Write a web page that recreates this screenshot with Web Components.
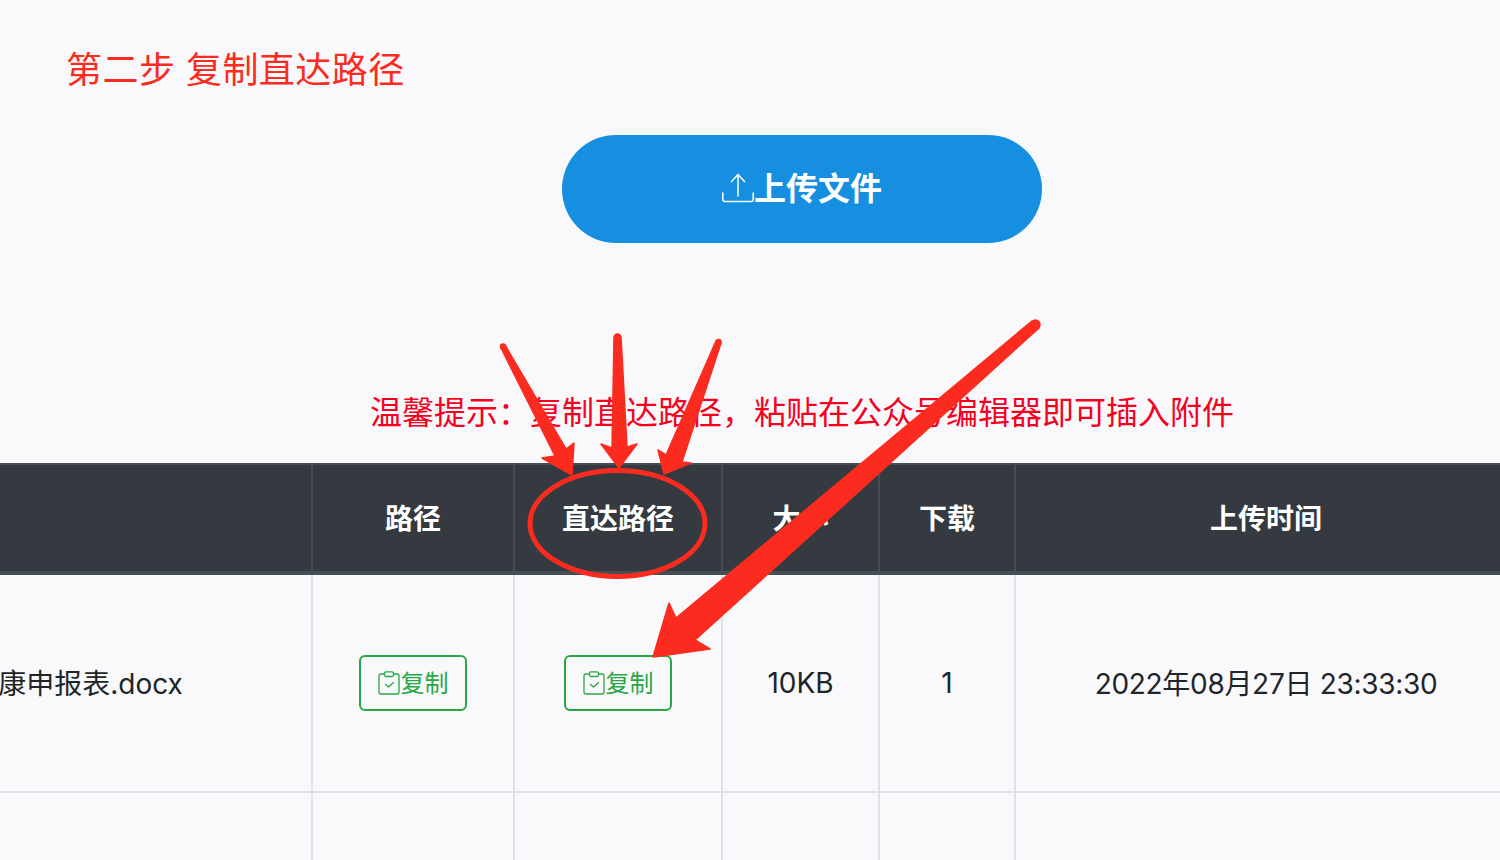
<!DOCTYPE html>
<html lang="zh">
<head>
<meta charset="utf-8">
<title>复制直达路径</title>
<style>
  html, body { margin: 0; padding: 0; height: 100%; overflow: hidden; background: #f9f9fc; }
  body { font-family: Inter, "Noto Sans CJK SC", sans-serif; color: #212529; }
</style>
</head>
<body>
<guide-page>
  <step-title>第二步 复制直达路径</step-title>
  <upload-button>上传文件</upload-button>
  <hint-text>温馨提示：复制直达路径，粘贴在公众号编辑器即可插入附件</hint-text>
  <file-table></file-table>
  <arrow-overlay></arrow-overlay>
</guide-page>

<script>
class GuidePage extends HTMLElement {
  constructor() {
    super();
    this.attachShadow({ mode: "open" });
    this.shadowRoot.innerHTML = `
      <style>
        :host {
          display: block;
          position: relative;
          width: 1500px;
          height: 860px;
          overflow: hidden;
          background: #f9f9fc;
        }
      </style>
      <slot></slot>
    `;
  }
}

class StepTitle extends HTMLElement {
  constructor() {
    super();
    this.attachShadow({ mode: "open" });
    this.shadowRoot.innerHTML = `
      <style>
        :host {
          display: block;
          padding: 45px 0 0 66px;
          font-size: 36px;
          letter-spacing: 0.45px;
          line-height: 50px;
          height: 50px;
          color: #fb2c1f;
        }
      </style>
      <slot></slot>
    `;
  }
}

class UploadButton extends HTMLElement {
  constructor() {
    super();
    this.attachShadow({ mode: "open" });
    this.shadowRoot.innerHTML = `
      <style>
        :host {
          display: flex;
          justify-content: center;
          margin: 40px 0 0 104px;
        }
        .btn {
          display: flex;
          align-items: center;
          justify-content: center;
          width: 480px;
          height: 108px;
          border-radius: 54px;
          background: #178fe0;
          color: #fff;
          font-size: 32px;
          font-weight: 700;
        }
        .label { padding-bottom: 6px; }
        svg { width: 32px; height: 32px; flex: none; }
      </style>
      <div class="btn">
        <svg viewBox="0 0 32 32" fill="none" stroke="#fff" stroke-width="1.5" stroke-linecap="round" stroke-linejoin="round">
          <path d="M16 1.500V23M9.500 8.500 16 1.500l6.500 7"/>
          <path d="M.8 20v6.500a2 2 0 0 0 2 2h26.400a2 2 0 0 0 2-2V20"/>
        </svg>
        <span class="label"><slot></slot></span>
      </div>
    `;
  }
}

class HintText extends HTMLElement {
  constructor() {
    super();
    this.attachShadow({ mode: "open" });
    this.shadowRoot.innerHTML = `
      <style>
        :host {
          display: block;
          margin: 146px 0 26px 104px;
          font-size: 32px;
          line-height: 48px;
          text-align: center;
          color: #f5001e;
        }
      </style>
      <slot></slot>
    `;
  }
}

class CopyButton extends HTMLElement {
  constructor() {
    super();
    this.attachShadow({ mode: "open" });
    this.shadowRoot.innerHTML = `
      <style>
        :host {
          display: inline-flex;
          align-items: center;
          justify-content: center;
          box-sizing: border-box;
          width: 108px;
          height: 56px;
          border: 2px solid #28a745;
          border-radius: 6px;
          color: #28a745;
          font-size: 24px;
          vertical-align: middle;
        }
        .label { padding-bottom: 4px; }
        svg { width: 23px; height: 25px; flex: none; }
      </style>
      <svg viewBox="0 0 23 25" fill="none" stroke="#28a745" stroke-width="1.300" stroke-linecap="round" stroke-linejoin="round">
        <path d="M6.500 3H3a2 2 0 0 0-2 2v16a2 2 0 0 0 2 2h16a2 2 0 0 0 2-2V5a2 2 0 0 0-2-2h-3.500"/>
        <rect x="6.500" y=".8" width="9" height="4.700" rx="1.500"/>
        <path d="m7.500 13.500 3 2.500 5-4.500"/>
      </svg>
      <span class="label"><slot>复制</slot></span>
    `;
  }
}

class FileTable extends HTMLElement {
  constructor() {
    super();
    this.attachShadow({ mode: "open" });
    this.shadowRoot.innerHTML = `
      <style>
        :host { display: block; margin-left: -158px; width: 1674px; }
        table {
          table-layout: fixed;
          width: 1674px;
          border-collapse: separate;
          border-spacing: 0;
          text-align: center;
          font-size: 28px;
        }
        th {
          height: 104px;
          padding: 0 0 2px;
          background: #343a40;
          color: #fff;
          font-weight: 700;
          border-top: 2px solid #454d55;
          border-bottom: 4px solid #454d55;
          border-left: 2px solid #454d55;
        }
        td {
          box-sizing: border-box;
          padding: 0;
          border-left: 2px solid #dee2e6;
          border-bottom: 2px solid #dee2e6;
        }
        th:first-child, td:first-child { border-left: 0; }
        .row td { height: 218px; }
        .row td.mixed { padding-bottom: 3px; }
        .date { letter-spacing: -0.3px; }
        .next td { height: 120px; border-bottom: 0; }
      </style>
      <table>
        <colgroup>
          <col style="width:469px"><col style="width:202px"><col style="width:208px">
          <col style="width:157px"><col style="width:136px"><col>
        </colgroup>
        <thead>
          <tr><th></th><th>路径</th><th>直达路径</th><th>大小</th><th>下载</th><th>上传时间</th></tr>
        </thead>
        <tbody>
          <tr class="row">
            <td class="mixed">健康申报表.docx</td>
            <td><copy-button></copy-button></td>
            <td><copy-button></copy-button></td>
            <td>10KB</td>
            <td>1</td>
            <td class="mixed date">2022年08月27日 23:33:30</td>
          </tr>
          <tr class="next"><td></td><td></td><td></td><td></td><td></td><td></td></tr>
        </tbody>
      </table>
    `;
  }
}

// annotation layer, drawn on top of the screenshot content
class ArrowOverlay extends HTMLElement {
  constructor() {
    super();
    this.attachShadow({ mode: "open" });
    this.shadowRoot.innerHTML = `
      <style>
        :host { position: absolute; left: 0; top: 0; width: 1500px; height: 860px; pointer-events: none; }
        svg { display: block; }
      </style>
      <svg width="1500" height="860" viewBox="0 0 1500 860">
        <ellipse cx="617.500" cy="523.500" rx="87.500" ry="53" fill="none" stroke="#fb2c1f" stroke-width="5"/>
        <g fill="#fb2c1f" stroke="#fb2c1f" stroke-width="1.500" stroke-linejoin="round">
          <polygon points="505,345 566,449 574,443 572,475 542,458 555,456 501,348"/>
          <circle cx="503" cy="346.500" r="2.500"/>
          <polygon points="614,337 621,337 627,447 637,444 619,468 601,444 612,448"/>
          <circle cx="617.500" cy="337" r="3"/>
          <polygon points="716,341 721,343 682,462 691,463 664,474 658,450 666,455"/>
          <circle cx="718.500" cy="342" r="2.500"/>
          <polygon points="1032,321 1039,328 695,640 710,649 653,657 669,603 676,618"/>
          <circle cx="1035.500" cy="324.500" r="4.500"/>
        </g>
      </svg>
    `;
  }
}

customElements.define("guide-page", GuidePage);
customElements.define("step-title", StepTitle);
customElements.define("upload-button", UploadButton);
customElements.define("hint-text", HintText);
customElements.define("copy-button", CopyButton);
customElements.define("file-table", FileTable);
customElements.define("arrow-overlay", ArrowOverlay);
</script>
</body>
</html>
